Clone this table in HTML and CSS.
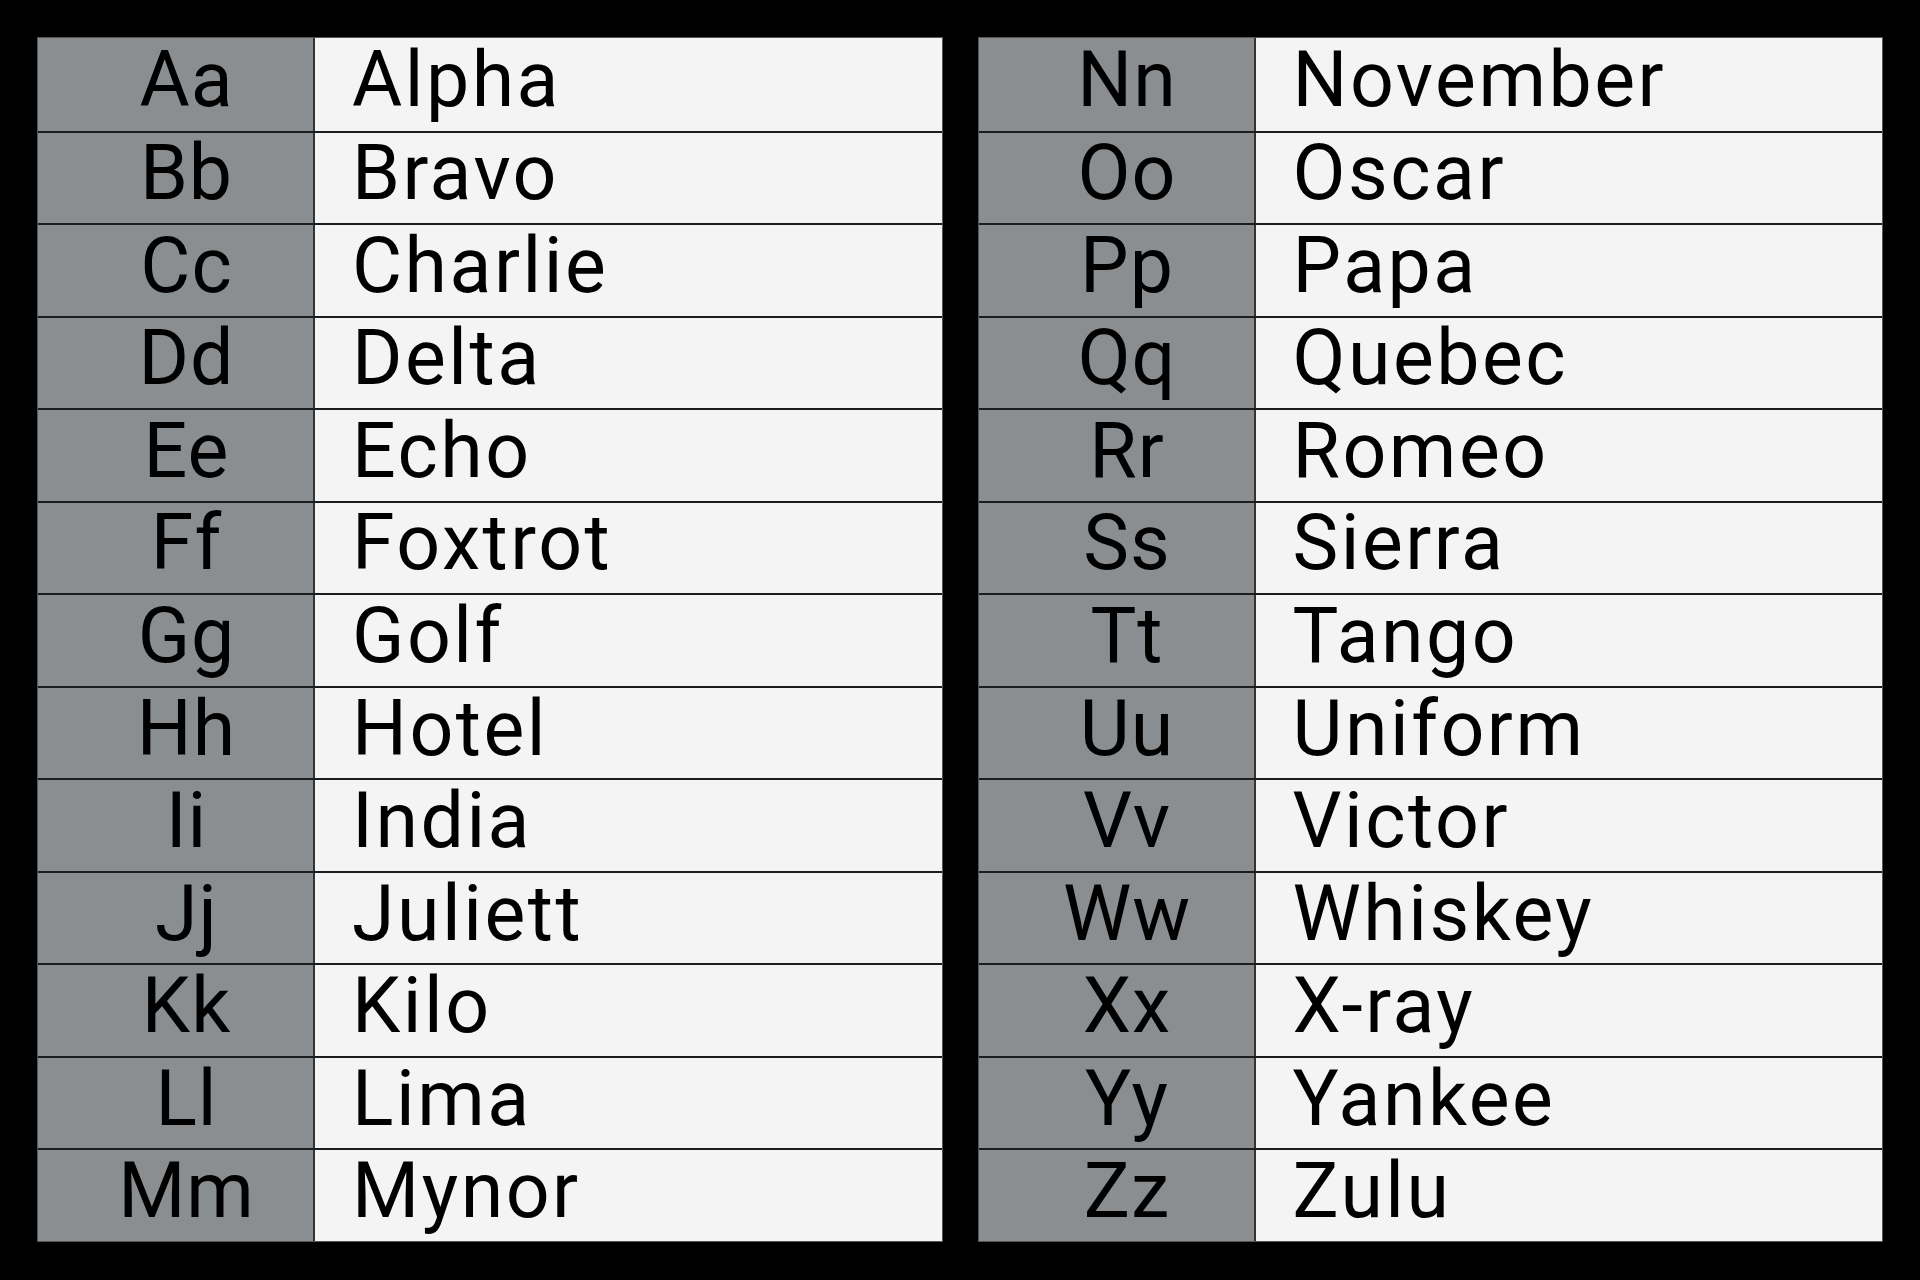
FILE: index.html
```html
<!DOCTYPE html>
<html>
<head>
<meta charset="utf-8">
<link rel="stylesheet" href="styles.css">
</head>
<body>
<div class="page">
  <div class="table">
    <div class="row"><div class="key">Aa</div><div class="word">Alpha</div></div>
    <div class="row"><div class="key">Bb</div><div class="word">Bravo</div></div>
    <div class="row"><div class="key">Cc</div><div class="word">Charlie</div></div>
    <div class="row"><div class="key">Dd</div><div class="word">Delta</div></div>
    <div class="row"><div class="key">Ee</div><div class="word">Echo</div></div>
    <div class="row"><div class="key">Ff</div><div class="word">Foxtrot</div></div>
    <div class="row"><div class="key">Gg</div><div class="word">Golf</div></div>
    <div class="row"><div class="key">Hh</div><div class="word">Hotel</div></div>
    <div class="row"><div class="key">Ii</div><div class="word">India</div></div>
    <div class="row"><div class="key">Jj</div><div class="word">Juliett</div></div>
    <div class="row"><div class="key">Kk</div><div class="word">Kilo</div></div>
    <div class="row"><div class="key">Ll</div><div class="word">Lima</div></div>
    <div class="row"><div class="key">Mm</div><div class="word">Mynor</div></div>
  </div>
  <div class="table">
    <div class="row"><div class="key">Nn</div><div class="word">November</div></div>
    <div class="row"><div class="key">Oo</div><div class="word">Oscar</div></div>
    <div class="row"><div class="key">Pp</div><div class="word">Papa</div></div>
    <div class="row"><div class="key">Qq</div><div class="word">Quebec</div></div>
    <div class="row"><div class="key">Rr</div><div class="word">Romeo</div></div>
    <div class="row"><div class="key">Ss</div><div class="word">Sierra</div></div>
    <div class="row"><div class="key">Tt</div><div class="word">Tango</div></div>
    <div class="row"><div class="key">Uu</div><div class="word">Uniform</div></div>
    <div class="row"><div class="key">Vv</div><div class="word">Victor</div></div>
    <div class="row"><div class="key">Ww</div><div class="word">Whiskey</div></div>
    <div class="row"><div class="key">Xx</div><div class="word">X-ray</div></div>
    <div class="row"><div class="key">Yy</div><div class="word">Yankee</div></div>
    <div class="row"><div class="key">Zz</div><div class="word">Zulu</div></div>
  </div>
</div>
</body>
</html>
```
FILE: styles.css
```css
html, body {
  margin: 0;
  padding: 0;
  background: #000;
}
.page {
  width: 1920px;
  height: 1280px;
  box-sizing: border-box;
  padding: 38px 38px 39px 38px;
  display: flex;
  gap: 37px;
  font-family: Roboto, "Liberation Sans", sans-serif;
  color: #000;
}
.table {
  flex: 1;
  display: grid;
  grid-template-rows: repeat(13, 1fr);
  background: #f4f4f4;
  outline: 1px solid #555;
}
.row {
  display: grid;
  grid-template-columns: 277px 1fr;
  border-top: 2px solid #1c1c1c;
}
.row:first-child {
  border-top: none;
}
.key {
  background: #8b8e91;
  border-right: 2px solid #333;
  display: flex;
  align-items: center;
  justify-content: center;
  font-size: 77px;
  line-height: 1;
  padding-left: 22px;
  padding-bottom: 8px;
  letter-spacing: 1px;
}
.word {
  display: flex;
  align-items: center;
  padding-left: 37px;
  font-size: 77px;
  line-height: 1;
  padding-bottom: 8px;
  letter-spacing: 2.5px;
}
```
